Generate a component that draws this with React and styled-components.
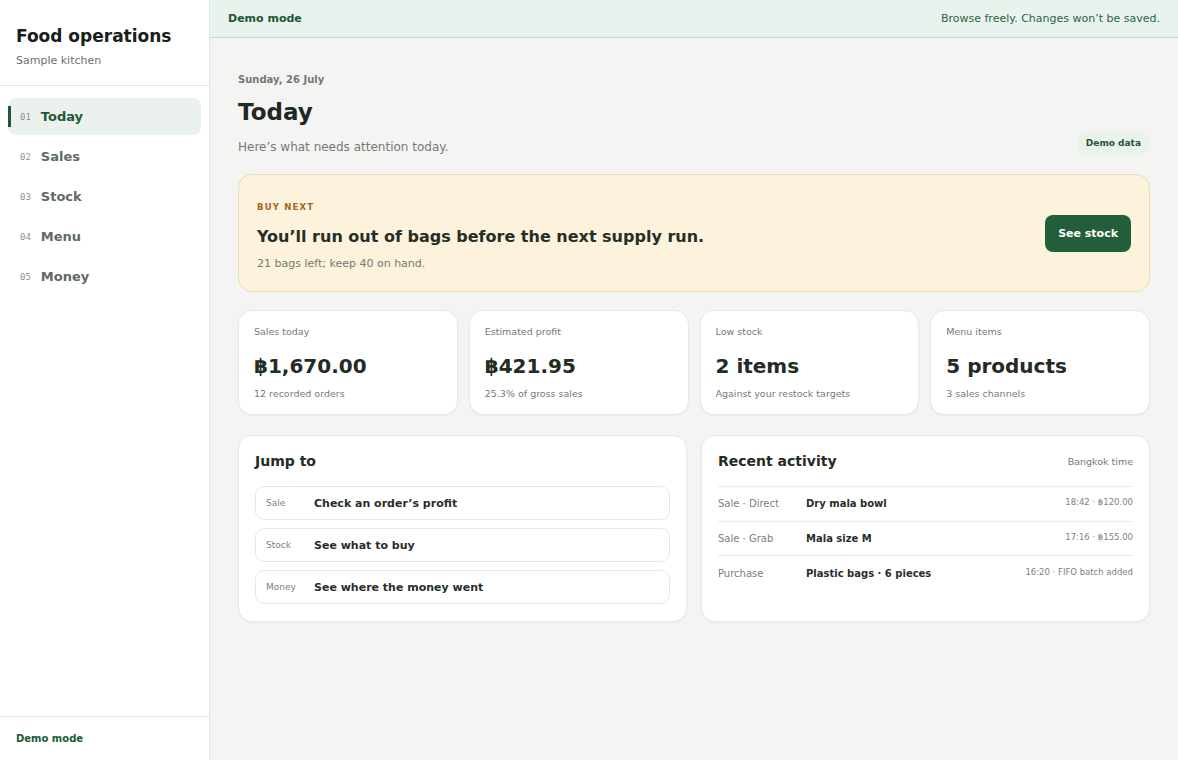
import React from "react";
import styled, { createGlobalStyle } from "styled-components";

const Global = createGlobalStyle`
  * { box-sizing: border-box; }
  html, body { margin: 0; padding: 0; }
  body {
    font-family: "DejaVu Sans", "Noto Sans", sans-serif;
    background: #f4f4f2;
    color: #222b25;
  }
`;

const Shell = styled.div`
  display: flex;
  min-height: 760px;
`;

const Sidebar = styled.aside`
  width: 210px;
  flex: none;
  background: #ffffff;
  border-right: 1px solid #e4e4e0;
  display: flex;
  flex-direction: column;
`;

const Brand = styled.div`
  padding: 25px 16px 17px;
  border-bottom: 1px solid #e4e4e0;
`;

const BrandTitle = styled.div`
  font-size: 17px;
  font-weight: 700;
  color: #18201b;
  line-height: 22px;
`;

const BrandSub = styled.div`
  margin-top: 7px;
  font-size: 11px;
  color: #6b716c;
  line-height: 14px;
`;

const Nav = styled.nav`
  display: flex;
  flex-direction: column;
  gap: 3px;
  padding: 12px 8px;
  flex: 1;
`;

const NavItem = styled.a`
  position: relative;
  display: flex;
  align-items: center;
  gap: 10px;
  height: 37px;
  padding: 0 12px;
  border-radius: 8px;
  text-decoration: none;
  background: ${(p) => (p.$active ? "#ebf2ed" : "transparent")};
  color: ${(p) => (p.$active ? "#1d5a36" : "#5f6a63")};

  &::before {
    content: "";
    display: ${(p) => (p.$active ? "block" : "none")};
    position: absolute;
    left: 0;
    top: 8px;
    bottom: 8px;
    width: 3px;
    background: #1c5a33;
  }
`;

const NavNum = styled.span`
  font-family: "DejaVu Sans Mono", monospace;
  font-size: 9px;
  color: #8b948e;
`;

const NavLabel = styled.span`
  font-size: 13px;
  font-weight: 700;
`;

const SideFoot = styled.div`
  border-top: 1px solid #e4e4e0;
  padding: 16px 16px 14px;
  font-size: 10px;
  font-weight: 700;
  color: #1d5a36;
  height: 44px;
`;

const Main = styled.main`
  flex: 1;
  display: flex;
  flex-direction: column;
`;

const DemoBar = styled.div`
  height: 38px;
  display: flex;
  align-items: center;
  justify-content: space-between;
  padding: 0 18px;
  background: #e9f3ee;
  border-bottom: 1px solid #c7d8ce;
  font-size: 11px;
  color: #2a6443;
`;

const DemoTag = styled.span`
  font-weight: 700;
  color: #1b5632;
`;

const Content = styled.div`
  padding: 35px 28px 28px;
  display: flex;
  flex-direction: column;
`;

const Header = styled.header`
  display: flex;
  justify-content: space-between;
  align-items: flex-end;
  margin-bottom: 19px;
`;

const DateLine = styled.div`
  font-size: 10px;
  font-weight: 700;
  color: #727a74;
  line-height: 14px;
`;

const Title = styled.h1`
  margin: 9px 0 0;
  font-size: 23px;
  font-weight: 700;
  color: #202823;
  line-height: 32px;
`;

const Lead = styled.p`
  margin: 11px 0 0;
  font-size: 12px;
  color: #737a75;
  line-height: 16px;
`;

const Pill = styled.span`
  display: inline-flex;
  align-items: center;
  height: 24px;
  padding: 0 9px;
  border-radius: 12px;
  background: #eaf2ec;
  font-size: 9px;
  font-weight: 700;
  color: #1f5534;
`;

const Alert = styled.section`
  display: flex;
  align-items: center;
  justify-content: space-between;
  background: #fdf2dc;
  border: 1px solid #efdcb2;
  border-radius: 14px;
  padding: 26px 18px 20px 18px;
`;

const Eyebrow = styled.div`
  font-size: 8.5px;
  font-weight: 700;
  letter-spacing: 1.2px;
  color: #a4661a;
  line-height: 12px;
`;

const AlertTitle = styled.div`
  margin-top: 13px;
  font-size: 16px;
  font-weight: 700;
  color: #262e28;
  line-height: 22px;
`;

const AlertSub = styled.div`
  margin-top: 9px;
  font-size: 11px;
  color: #747a75;
  line-height: 14px;
`;

const Button = styled.button`
  height: 37px;
  padding: 0 13px;
  margin-bottom: 6px;
  border: none;
  border-radius: 8px;
  background: #235e3a;
  color: #ffffff;
  font-family: inherit;
  font-size: 11px;
  font-weight: 700;
  cursor: pointer;
`;

const Stats = styled.div`
  margin-top: 18px;
  display: grid;
  grid-template-columns: repeat(4, 1fr);
  gap: 11px;
`;

const Card = styled.div`
  background: #ffffff;
  border: 1px solid #e8e8e4;
  border-radius: 14px;
  box-shadow: 0 1px 2px rgba(30, 40, 30, 0.04);
`;

const StatCard = styled(Card)`
  padding: 14px 15px 16px;
  height: 105px;
`;

const StatLabel = styled.div`
  font-size: 9.5px;
  color: #737a75;
  line-height: 13px;
`;

const StatValue = styled.div`
  margin-top: 15px;
  font-size: 20px;
  font-weight: 700;
  color: #232b25;
  line-height: 26px;
`;

const StatSub = styled.div`
  margin-top: 8px;
  font-size: 9.5px;
  color: #757b76;
  line-height: 13px;
`;

const Panels = styled.div`
  margin-top: 20px;
  display: grid;
  grid-template-columns: 1fr 1fr;
  gap: 14px;
`;

const Panel = styled(Card)`
  padding: 14px 16px 16px;
  height: 187px;
`;

const PanelHead = styled.div`
  display: flex;
  justify-content: space-between;
  align-items: center;
  height: 22px;
`;

const PanelTitle = styled.h2`
  margin: 0;
  font-size: 14px;
  font-weight: 700;
  color: #232b25;
`;

const PanelNote = styled.span`
  font-size: 9.5px;
  color: #757b76;
`;

const LinkList = styled.div`
  margin-top: 14px;
  display: flex;
  flex-direction: column;
  gap: 8px;
`;

const LinkRow = styled.a`
  display: grid;
  grid-template-columns: 48px 1fr;
  align-items: center;
  height: 34px;
  padding: 0 10px;
  border: 1px solid #e8e8e4;
  border-radius: 9px;
  text-decoration: none;
`;

const LinkKind = styled.span`
  font-size: 9px;
  color: #7c827d;
`;

const LinkText = styled.span`
  font-size: 11px;
  font-weight: 700;
  color: #272e29;
`;

const Feed = styled.div`
  margin-top: 14px;
  border-top: 1px solid #ececE8;
`;

const FeedRow = styled.div`
  display: grid;
  grid-template-columns: 88px 1fr auto;
  align-items: center;
  height: 34.5px;
  border-bottom: ${(p) => (p.$last ? "none" : "1px solid #ececE8")};
`;

const FeedKind = styled.span`
  font-size: 10px;
  color: #7a807b;
`;

const FeedName = styled.span`
  font-size: 10px;
  font-weight: 700;
  color: #272e29;
`;

const FeedMeta = styled.span`
  font-size: 8.5px;
  color: #7c827d;
  margin-top: -3px;
`;

const navItems = [
  ["01", "Today"],
  ["02", "Sales"],
  ["03", "Stock"],
  ["04", "Menu"],
  ["05", "Money"],
];

const stats = [
  ["Sales today", "฿1,670.00", "12 recorded orders"],
  ["Estimated profit", "฿421.95", "25.3% of gross sales"],
  ["Low stock", "2 items", "Against your restock targets"],
  ["Menu items", "5 products", "3 sales channels"],
];

const links = [
  ["Sale", "Check an order’s profit"],
  ["Stock", "See what to buy"],
  ["Money", "See where the money went"],
];

const activity = [
  ["Sale · Direct", "Dry mala bowl", "18:42 · ฿120.00"],
  ["Sale · Grab", "Mala size M", "17:16 · ฿155.00"],
  ["Purchase", "Plastic bags · 6 pieces", "16:20 · FIFO batch added"],
];

export default function App() {
  return (
    <>
      <Global />
      <Shell>
        <Sidebar>
          <Brand>
            <BrandTitle>Food operations</BrandTitle>
            <BrandSub>Sample kitchen</BrandSub>
          </Brand>
          <Nav>
            {navItems.map(([n, label], i) => (
              <NavItem key={n} href="#" $active={i === 0}>
                <NavNum>{n}</NavNum>
                <NavLabel>{label}</NavLabel>
              </NavItem>
            ))}
          </Nav>
          <SideFoot>Demo mode</SideFoot>
        </Sidebar>
        <Main>
          <DemoBar>
            <DemoTag>Demo mode</DemoTag>
            <span>Browse freely. Changes won’t be saved.</span>
          </DemoBar>
          <Content>
            <Header>
              <div>
                <DateLine>Sunday, 26 July</DateLine>
                <Title>Today</Title>
                <Lead>Here’s what needs attention today.</Lead>
              </div>
              <Pill>Demo data</Pill>
            </Header>
            <Alert>
              <div>
                <Eyebrow>BUY NEXT</Eyebrow>
                <AlertTitle>You’ll run out of bags before the next supply run.</AlertTitle>
                <AlertSub>21 bags left; keep 40 on hand.</AlertSub>
              </div>
              <Button>See stock</Button>
            </Alert>
            <Stats>
              {stats.map(([label, value, sub]) => (
                <StatCard key={label}>
                  <StatLabel>{label}</StatLabel>
                  <StatValue>{value}</StatValue>
                  <StatSub>{sub}</StatSub>
                </StatCard>
              ))}
            </Stats>
            <Panels>
              <Panel>
                <PanelHead>
                  <PanelTitle>Jump to</PanelTitle>
                </PanelHead>
                <LinkList>
                  {links.map(([kind, text]) => (
                    <LinkRow key={kind} href="#">
                      <LinkKind>{kind}</LinkKind>
                      <LinkText>{text}</LinkText>
                    </LinkRow>
                  ))}
                </LinkList>
              </Panel>
              <Panel>
                <PanelHead>
                  <PanelTitle>Recent activity</PanelTitle>
                  <PanelNote>Bangkok time</PanelNote>
                </PanelHead>
                <Feed>
                  {activity.map(([kind, name, meta], i) => (
                    <FeedRow key={name} $last={i === activity.length - 1}>
                      <FeedKind>{kind}</FeedKind>
                      <FeedName>{name}</FeedName>
                      <FeedMeta>{meta}</FeedMeta>
                    </FeedRow>
                  ))}
                </Feed>
              </Panel>
            </Panels>
          </Content>
        </Main>
      </Shell>
    </>
  );
}
